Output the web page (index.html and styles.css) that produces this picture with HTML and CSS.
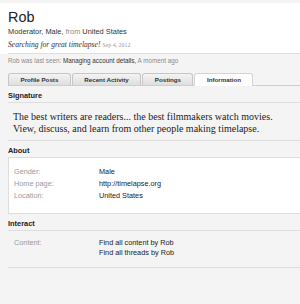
FILE: index.html
```html
<!DOCTYPE html>
<html lang="en">
<head>
    <meta charset="UTF-8">
    <meta name="viewport" content="width=device-width, initial-scale=1.0">
    <title>Rob - Member Profile</title>
    <link rel="stylesheet" href="styles.css">
</head>
<body>
    <div class="profile-header">
        <div class="header-inner">
            <h1>Rob</h1>
            <p class="user-blurb">Moderator, Male, <span class="muted">from</span> United States</p>
            <p class="user-status">Searching for great timelapse! <span class="status-date">Sep 4, 2012</span></p>
        </div>
    </div>

    <div class="container">
        <p class="last-seen">
            <span class="muted">Rob was last seen:</span> Managing account details, <span class="muted">A moment ago</span>
        </p>

        <ul class="tabs">
            <li class="tab">Profile Posts</li>
            <li class="tab">Recent Activity</li>
            <li class="tab">Postings</li>
            <li class="tab active">Information</li>
        </ul>

        <div class="section">
            <h3>Signature</h3>
            <div class="signature">
                The best writers are readers... the best filmmakers watch movies.<br>
                View, discuss, and learn from other people making timelapse.
            </div>
        </div>

        <div class="section">
            <h3>About</h3>
            <div class="info-box">
                <dl class="pairs">
                    <dt>Gender:</dt>
                    <dd>Male</dd>
                </dl>
                <dl class="pairs">
                    <dt>Home page:</dt>
                    <dd>http://timelapse.org</dd>
                </dl>
                <dl class="pairs">
                    <dt>Location:</dt>
                    <dd>United States</dd>
                </dl>
            </div>
        </div>

        <div class="section">
            <h3>Interact</h3>
            <div class="interact">
                <dl class="pairs">
                    <dt>Content:</dt>
                    <dd>
                        <div>Find all content by Rob</div>
                        <div>Find all threads by Rob</div>
                    </dd>
                </dl>
            </div>
        </div>
    </div>
</body>
</html>
```

FILE: styles.css
```css
body {
    font-family: 'Liberation Sans', Arial, sans-serif;
    margin: 0;
    padding: 3px 0 0 0;
    background-color: #f4f4f4;
    color: #222;
}

p, ul, dl, dd, h1, h3 {
    margin: 0;
    padding: 0;
}

.muted {
    color: #8a8a8a;
}

.profile-header {
    background-color: #fff;
    padding: 6px 0 0 8px;
}

.header-inner {
    border-bottom: 1px solid #dedede;
    padding-bottom: 2px;
}

h1 {
    font-size: 14.4px;
    font-weight: normal;
    line-height: 17px;
    color: #222;
}

.user-blurb {
    font-size: 7.4px;
    line-height: 11px;
    color: #333;
}

.user-status {
    margin-top: 2px;
    font-family: 'Liberation Serif', 'Times New Roman', serif;
    font-style: italic;
    font-size: 7.6px;
    line-height: 12px;
    color: #333;
}

.status-date {
    font-style: normal;
    font-size: 5.9px;
    color: #999;
}

.container {
    padding-left: 8px;
}

.last-seen {
    padding-top: 2px;
    font-size: 6.3px;
    line-height: 10px;
    color: #333;
}

.tabs {
    list-style: none;
    display: flex;
    gap: 1px;
    margin-top: 7px;
    border-bottom: 1px solid #cfcfcf;
}

.tab {
    padding: 0 11.5px;
    line-height: 11px;
    font-size: 6.2px;
    font-weight: bold;
    color: #333;
    border: 1px solid #c6c6c6;
    border-bottom: none;
    border-radius: 3px 3px 0 0;
    background: linear-gradient(#f4f4f4, #dedede);
}

.tab.active {
    background: #fff;
    border-color: #d3d3d3;
    margin-bottom: -1px;
    padding-bottom: 1px;
}

.section h3 {
    font-size: 7.4px;
    font-weight: bold;
    line-height: 10px;
    color: #222;
    padding: 5px 0 1px;
    border-bottom: 1px solid #dedede;
}

.signature {
    font-family: 'Liberation Serif', 'Times New Roman', serif;
    font-size: 10px;
    line-height: 12px;
    color: #222;
    padding: 8px 0 5px 5px;
    border-bottom: 1px solid #dedede;
}

.info-box {
    background-color: #fff;
    border: 1px solid #dedede;
    border-top: none;
    border-right: none;
    padding: 9px 0 12px 5px;
    display: flex;
    flex-direction: column;
    gap: 2px;
}

.pairs {
    display: grid;
    grid-template-columns: 85px 1fr;
    font-size: 7.3px;
    line-height: 10px;
}

.pairs dt {
    color: #999;
}

.pairs dd {
    color: #222;
}

.interact {
    padding: 7px 0 9px 6px;
    border-bottom: 1px solid #dedede;
}
```
